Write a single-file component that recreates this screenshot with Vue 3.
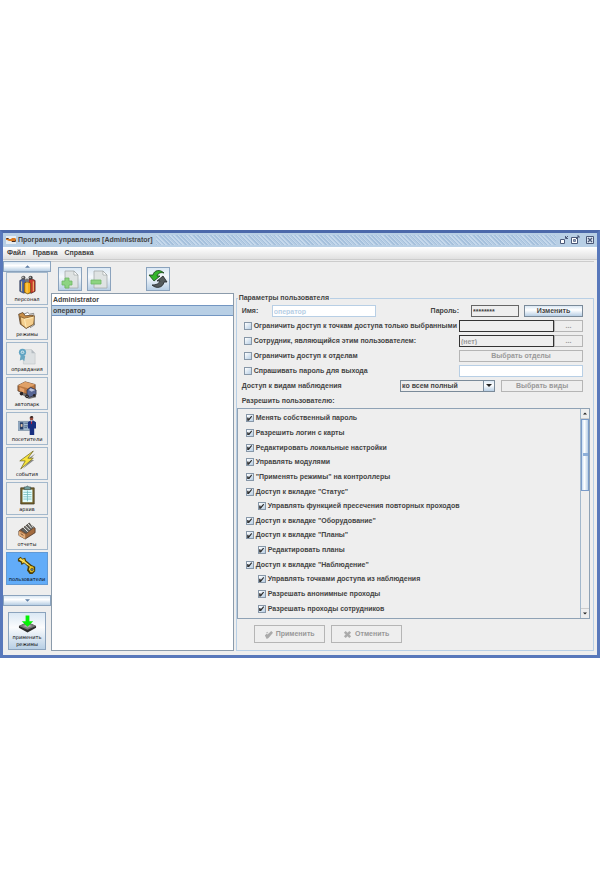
<script setup>
import { ref } from 'vue'

const sections = [
  { id: 'staff', label: 'персонал' },
  { id: 'modes', label: 'режимы' },
  { id: 'excuse', label: 'оправдания' },
  { id: 'cars', label: 'автопарк' },
  { id: 'visitors', label: 'посетители' },
  { id: 'events', label: 'события' },
  { id: 'archive', label: 'архив' },
  { id: 'reports', label: 'отчеты' },
  { id: 'users', label: 'пользователи' }
]
const activeSection = ref('users')
const users = ['Administrator', 'оператор']
const selectedUser = ref('оператор')
const permissions = ref([
  { text: 'Менять собственный пароль', on: true },
  { text: 'Разрешить логин с карты', on: true },
  { text: 'Редактировать локальные настройки', on: true },
  { text: 'Управлять модулями', on: true },
  { text: '"Применять режимы" на контроллеры', on: true },
  { text: 'Доступ к вкладке "Статус"', on: true },
  { text: 'Управлять функцией пресечения повторных проходов', on: true, sub: true },
  { text: 'Доступ к вкладке "Оборудование"', on: true },
  { text: 'Доступ к вкладке "Планы"', on: true },
  { text: 'Редактировать планы', on: true, sub: true },
  { text: 'Доступ к вкладке "Наблюдение"', on: true },
  { text: 'Управлять точками доступа из наблюдения', on: true, sub: true },
  { text: 'Разрешать анонимные проходы', on: true, sub: true },
  { text: 'Разрешать проходы сотрудников', on: true, sub: true }
])
</script>

<template>
  <main class="screen">
    <div class="window">
      <header class="titlebar">
        <svg class="app-icon" viewBox="0 0 10 8">
          <rect width="10" height="8" fill="#e6edf2" />
          <path d="M0 2h2l1 1h2l1-1h3l1 1v2l-1 1H6L5 5H3L1 4H0z" fill="#d97a22" />
          <path d="M0 2h2l1 1H1zM6 5h3l1-1v1L9 6H6z" fill="#3d2b25" />
        </svg>
        <h1>Программа управления [Administrator]</h1>
        <span class="bumps"></span>
        <button class="win-btn" aria-label="Свернуть">
          <svg viewBox="0 0 10 10"><path d="M1.500 4.500h4v4h-4z" fill="#fff" stroke="#4a5878" /><path d="M9 1L7 3M6.500 1v2.500H9" fill="none" stroke="#4a5878" /></svg>
        </button>
        <button class="win-btn" aria-label="Развернуть">
          <svg viewBox="0 0 10 10"><path d="M1.500 2.500h6v6h-6z" fill="#fff" stroke="#4a5878" /><path d="M3.500 6.500v-2h2v2z" fill="#8fa3c0" stroke="#4a5878" stroke-width=".7" /><path d="M6 4l3-3M7 1h2v2" fill="none" stroke="#4a5878" /></svg>
        </button>
        <button class="win-btn close" aria-label="Закрыть">
          <svg viewBox="0 0 10 10"><path d="M1.500 1.500h7v7h-7z" fill="#dfe9f3" stroke="#4a5878" /><path d="M3 3l4 4M7 3L3 7" stroke="#4a5878" stroke-width="1.300" /></svg>
        </button>
      </header>

      <nav class="menu">
        <a href="#file">Файл</a>
        <a href="#edit">Правка</a>
        <a href="#help">Справка</a>
      </nav>

      <div class="content">
        <aside class="sidebar">
          <button class="scroll-strip" aria-label="Вверх"><svg viewBox="0 0 6 3"><path d="M0 3l3-3 3 3z" fill="#5e7ea6" /></svg></button>
          <div class="sections">
            <button
              v-for="s in sections"
              :key="s.id"
              class="section"
              :class="{ active: s.id === activeSection }"
              @click="activeSection = s.id"
            >
              <svg v-if="s.id === 'staff'" viewBox="0 0 20 22">
                <path d="M6 20l8 1 5-3-4-1z" fill="#9b9b9b" />
                <path d="M2 6l4-2 3 2v13l-3 1-4-2z" fill="#4a63a5" stroke="#1d2440" stroke-width=".7" />
                <path d="M12 5l3-1 4 2v12l-4 2-3-2z" fill="#c93a2c" stroke="#3a1512" stroke-width=".7" />
                <path d="M7 9l3-2 4 2v10l-3 2-4-2z" fill="#f7ae18" stroke="#59400e" stroke-width=".7" />
                <path d="M10 9v11M4 7v11M17 7v11" stroke="#fbd97b" stroke-width="1" />
                <circle cx="6" cy="3" r="2.300" fill="#555" /><circle cx="14" cy="3" r="2.300" fill="#444" />
                <circle cx="10" cy="6" r="2.200" fill="#777" /><circle cx="5.500" cy="2.500" r=".9" fill="#ddd" /><circle cx="13.500" cy="2.500" r=".9" fill="#ccc" />
              </svg>
              <svg v-else-if="s.id === 'modes'" class="wide" viewBox="0 0 24 22">
                <path d="M8 4l5-2 2 2 5-1 1 14-5 3z" fill="#fff" stroke="#444" stroke-width=".7" />
                <path d="M2 4l5-2 3 4 9-1 1 11-9 5-7-5z" fill="#c98f49" stroke="#3f2b15" stroke-width=".8" />
                <path d="M4 7l5 2 12-3-1 10-9 5-6-5z" fill="#f5cf8e" stroke="#6b481f" stroke-width=".8" />
                <path d="M9 10l10-2M9 10l2 10" stroke="#fff0c2" />
              </svg>
              <svg v-else-if="s.id === 'excuse'" viewBox="0 0 20 22">
                <path d="M6 5h9l4 4v12H6z" fill="#dce0e2" stroke="#c1c6c9" stroke-width=".7" /><path d="M15 5l4 4h-4z" fill="#b5bcc1" />
                <path d="M3 11l-1 6 3-1 2 2 1-6" fill="#68a6c1" />
                <circle cx="5" cy="8" r="4" fill="#61a4c3" /><circle cx="5" cy="8" r="2" fill="#c5dfe9" /><circle cx="5" cy="8" r="1" fill="#76aec6" />
              </svg>
              <svg v-else-if="s.id === 'cars'" class="wide" viewBox="0 0 22 22">
                <path d="M2 14l11 7 8-2v-2z" fill="#747474" />
                <path d="M1 6l8-4 11 3v7l-8 4-11-4z" fill="#bb7842" stroke="#40271b" stroke-width=".7" />
                <path d="M1 6l8-4 11 3-8 4z" fill="#e0a168" /><path d="M3 8v4l5 2v-4z" fill="#e5a16c" />
                <path d="M11 11l4-3 6 3v5l-7 3-3-2z" fill="#596796" stroke="#25283c" stroke-width=".7" /><path d="M13 11l2-2 5 2-4 2z" fill="#bdc5dc" />
                <circle cx="5" cy="15" r="2" fill="#292426" /><circle cx="11" cy="18" r="2" fill="#292426" /><circle cx="19" cy="17" r="1.500" fill="#292426" /><circle cx="11" cy="18" r=".7" fill="#aaa" />
              </svg>
              <svg v-else-if="s.id === 'visitors'" viewBox="0 0 20 22">
                <path d="M0 7h13v10H0z" fill="#a6bdd2" stroke="#62788f" stroke-width=".7" /><path d="M2 8h4v8H2z" fill="#263e68" /><path d="M3 10h2v3H3z" fill="#e2c6aa" /><path d="M7 9h4M7 12h4M7 14h3" stroke="#3c5878" />
                <circle cx="15" cy="4" r="2" fill="#984e40" /><path d="M13 3c0-2 4-3 4 0z" fill="#2b1a18" />
                <path d="M11 8l3-2h3l3 2v7h-2v7h-5v-7h-2z" fill="#182f80" /><path d="M14 6h2l-1 4z" fill="#fff" /><path d="M15 7v3" stroke="#b71b30" />
              </svg>
              <svg v-else-if="s.id === 'events'" viewBox="0 0 20 22">
                <path d="M19 4L9 11h5L5 21l13-10h-5z" fill="#8d8d8d" />
                <path d="M17 1L2 12h6L3 21 17 9h-6z" fill="#f8e43c" stroke="#6c641f" stroke-width=".8" />
              </svg>
              <svg v-else-if="s.id === 'archive'" viewBox="0 0 20 22">
                <path d="M3 3h15v18H3z" fill="#75632d" stroke="#41381c" stroke-width=".8" /><path d="M5 5h11v14H5z" fill="#e5ffff" />
                <path d="M7 2h2l1-1h1l1 1h2v3H7z" fill="#729d9d" stroke="#344b4b" stroke-width=".6" />
                <path d="M6 8h9M6 10.500h9M6 13h9M6 15.500h9M10.500 6v12" stroke="#6fb8ba" stroke-width=".9" />
              </svg>
              <svg v-else-if="s.id === 'reports'" viewBox="0 0 20 22">
                <path d="M1 12l11-8 7 5v5L8 21l-7-4z" fill="#a36b3f" stroke="#432e20" stroke-width=".8" />
                <path d="M3 11l10-8 5 5-9 7z" fill="#62615e" stroke="#333" stroke-width=".5" />
                <path d="M5 7l6 6M7 5l6 6M10 3l5 6M13 2l4 6" stroke="#f2f2ed" stroke-width="1.100" />
                <path d="M1 12l7 4v5l-7-4z" fill="#e3af7c" /><path d="M3 15l3 2" stroke="#6d452b" />
              </svg>
              <svg v-else class="wide" viewBox="0 0 22 22">
                <path d="M1 4l3-2 2 2 3-1 1 3 6 5 4 2v5l-3 3h-3l-3-4 1-4-4-4-3 2-1-3-3-1z" fill="#4b3d05" />
                <path d="M2 5l2-2 2 2 2-1 1 3 6 5 3 1 1 4-2 2h-2l-2-3 1-3-6-5-2 1-1-2z" fill="#efc92f" />
                <path d="M3 5l3 1 6 5" fill="none" stroke="#fff199" stroke-width=".9" />
                <circle cx="16.500" cy="16" r="1.500" fill="#4f749a" stroke="#5b4800" stroke-width=".6" />
              </svg>
              <span>{{ s.label }}</span>
            </button>
          </div>
          <button class="scroll-strip down" aria-label="Вниз"><svg viewBox="0 0 6 3"><path d="M0 0h6L3 3z" fill="#5e7ea6" /></svg></button>
          <button class="apply-modes">
            <svg viewBox="0 0 20 18">
              <path d="M1 11l9-4 9 4v2l-9 5-9-5z" fill="#2d2d2d" /><path d="M1 11l9-4 9 4-9 4z" fill="#777" /><path d="M5 11l5-2 5 2-5 2z" fill="#a5a5a5" />
              <path d="M8 0h4v6h4l-6 6-6-6h4z" fill="#05f205" />
            </svg>
            <span>применить режимы</span>
          </button>
        </aside>

        <div class="work">
          <div class="toolbar">
            <button aria-label="Добавить">
              <svg viewBox="0 0 20 20"><path d="M5 2h9l4 4v13H5z" fill="#dfe3e3" stroke="#a5abac" stroke-width=".8" /><path d="M14 2v4h4z" fill="#fff" stroke="#949b9c" stroke-width=".6" /><path d="M5 9h4v3h3v4H9v3H5v-3H2v-4h3z" fill="#8dd481" stroke="#6fb766" stroke-width=".8" /></svg>
            </button>
            <button aria-label="Удалить">
              <svg viewBox="0 0 20 20"><path d="M5 2h9l4 4v13H5z" fill="#dfe3e3" stroke="#a5abac" stroke-width=".8" /><path d="M14 2v4h4z" fill="#fff" stroke="#949b9c" stroke-width=".6" /><path d="M2 11h10v4H2z" fill="#8dd481" stroke="#6fb766" stroke-width=".8" /></svg>
            </button>
            <button class="refresh" aria-label="Обновить">
              <svg viewBox="0 0 20 20">
                <path d="M16 4C12 0 6 1 5 6H1l5 6 6-5H9c1-3 4-4 7-3z" fill="#35b62b" stroke="#173c18" stroke-width=".8" />
                <path d="M4 16c4 4 11 3 12-3h3l-4-6-6 5h3c-1 3-4 4-8 4z" fill="#555b5d" stroke="#202526" stroke-width=".8" />
              </svg>
            </button>
          </div>

          <div class="panes">
            <ul class="users">
              <li v-for="u in users" :key="u">
                <button :class="{ selected: u === selectedUser }" @click="selectedUser = u">{{ u }}</button>
              </li>
            </ul>

            <fieldset class="params">
              <legend>Параметры пользователя</legend>
              <div class="form">
                <div class="row">
                  <label class="name-label" for="name">Имя:</label>
                  <input id="name" class="name" type="text" value="оператор" disabled />
                  <label class="push" for="pass">Пароль:</label>
                  <input id="pass" class="pass" type="text" value="********" readonly />
                  <button class="btn change">Изменить</button>
                </div>
                <div class="row">
                  <label class="check"><input type="checkbox" />Ограничить доступ к точкам доступа только выбранными</label>
                  <input class="dark" type="text" aria-label="Точки доступа" disabled />
                  <button class="btn dots" disabled>...</button>
                </div>
                <div class="row">
                  <label class="check"><input type="checkbox" />Сотрудник, являющийся этим пользователем:</label>
                  <input class="dark" type="text" value="(нет)" aria-label="Сотрудник" disabled />
                  <button class="btn dots" disabled>...</button>
                </div>
                <div class="row">
                  <label class="check"><input type="checkbox" />Ограничить доступ к отделам</label>
                  <button class="btn full" disabled>Выбрать отделы</button>
                </div>
                <div class="row">
                  <label class="check"><input type="checkbox" />Спрашивать пароль для выхода</label>
                  <input class="full exit" type="text" aria-label="Пароль для выхода" />
                </div>
                <div class="row">
                  <label for="views">Доступ к видам наблюдения</label>
                  <div class="combo">
                    <select id="views"><option>ко всем полный</option></select>
                    <span class="combo-arrow"><svg viewBox="0 0 6 3"><path d="M0 0h6L3 3z" fill="#222" /></svg></span>
                  </div>
                  <button class="btn views" disabled>Выбрать виды</button>
                </div>
                <div class="row"><span>Разрешить пользователю:</span></div>
              </div>

              <div class="perm-box">
                <div class="perms">
                  <label v-for="p in permissions" :key="p.text" class="check" :class="{ sub: p.sub }">
                    <input v-model="p.on" type="checkbox" />{{ p.text }}
                  </label>
                </div>
                <div class="scrollbar">
                  <button aria-label="Прокрутить вверх"><svg viewBox="0 0 6 3"><path d="M0 3l3-3 3 3z" fill="#222" /></svg></button>
                  <div class="track"><div class="thumb"></div></div>
                  <button aria-label="Прокрутить вниз"><svg viewBox="0 0 6 3"><path d="M0 0h6L3 3z" fill="#222" /></svg></button>
                </div>
              </div>

              <div class="actions">
                <button class="btn" disabled>
                  <svg viewBox="0 0 10 10"><path d="M1 6l2-2 1 1 4-4 2 2-5 6-2 1z" fill="#aaa" /><path d="M2 3l2-1 1 2z" fill="#bbb" /></svg>Применить
                </button>
                <button class="btn" disabled>
                  <svg viewBox="0 0 10 10"><path d="M1 3l2-2 2 2 2-2 2 2-2 2 2 2-2 2-2-2-2 2-2-2 2-2z" fill="#aaa" /></svg>Отменить
                </button>
              </div>
            </fieldset>
          </div>
        </div>
      </div>
    </div>
  </main>
</template>

<style>
body {
  margin: 0;
  background: #fff;
}
</style>

<style scoped>
* {
  box-sizing: border-box;
}
.screen {
  min-height: 100vh;
  display: flex;
  flex-direction: column;
  justify-content: center;
  font: bold 7px/10px "Liberation Sans", Arial, sans-serif;
  color: #444;
}
button,
input,
select {
  margin: 0;
  padding: 0;
  font: inherit;
  color: inherit;
  border-radius: 0;
  outline: 0;
}
svg {
  display: block;
  flex: none;
}
.window {
  background: #eee;
  border: 3px solid #5878bb;
  border-top-color: #4c69aa;
}
.titlebar {
  height: 14px;
  display: flex;
  align-items: center;
  padding: 0 2px 0 3px;
  background: #b8cfe5;
}
.app-icon {
  width: 10px;
  height: 8px;
}
h1 {
  margin: 0 3px 0 2px;
  font: inherit;
}
.bumps {
  flex: 1;
  height: 10px;
  margin-right: 2px;
  background: repeating-linear-gradient(45deg, #a5c0dc 0 1px, #c6d9ec 1px 2px, #b5cce3 2px 3px);
}
.win-btn {
  width: 10px;
  height: 10px;
  margin-left: 1px;
  border: 0;
  background: none;
}
.win-btn.close {
  margin-left: 5px;
}
.menu {
  height: 13px;
  display: flex;
  align-items: center;
  gap: 7px;
  padding-left: 4px;
  background: linear-gradient(#fff, #e0e0e0);
  border-bottom: 1px solid #ccc;
}
.menu a {
  color: inherit;
  text-decoration: none;
}
.content {
  display: grid;
  grid-template-columns: 48px 1fr;
  padding: 1px 3px 4px 0;
}
.sidebar {
  display: flex;
  flex-direction: column;
  align-items: center;
}
.scroll-strip {
  width: 100%;
  height: 11px;
  display: grid;
  place-items: center;
  border: 1px solid #8ba3bd;
  background: linear-gradient(#dbe8f4, #fff 40%, #b8cfe5);
}
.scroll-strip svg {
  width: 5px;
  height: 3px;
}
.sections {
  display: grid;
  gap: 2px;
  margin-bottom: 10px;
}
.section {
  width: 42px;
  height: 33px;
  display: flex;
  flex-direction: column;
  align-items: center;
  justify-content: flex-end;
  padding-bottom: 1px;
  border: 1px solid #a3b8cc;
  background: #eee;
  color: #000;
}
.section svg {
  width: 18px;
  height: 20px;
}
.section svg.wide {
  width: 20px;
}
.section span,
.apply-modes span {
  font: 5px/8px "DejaVu Sans", sans-serif;
}
.section.active {
  background: #62acf8;
  border-color: #6199d4;
}
.apply-modes {
  width: 38px;
  height: 38px;
  display: flex;
  flex-direction: column;
  align-items: center;
  justify-content: space-between;
  margin-top: 6px;
  padding: 2px 4px 1px;
  border: 1px solid #8ba3bd;
  background: linear-gradient(#dbe8f4, #fbfcfd 40%, #b8cfe5);
  color: #000;
}
.apply-modes svg {
  width: 19px;
  height: 18px;
}
.apply-modes span {
  line-height: 7px;
}
.work {
  min-width: 0;
  display: flex;
  flex-direction: column;
}
.toolbar {
  height: 32px;
  display: flex;
  align-items: center;
  gap: 5px;
  padding: 3px 0 0 7px;
  border-top: 1px solid #ccc;
}
.toolbar button {
  width: 24px;
  height: 24px;
  display: grid;
  place-items: center;
  border: 1px solid #8ba3bd;
  background: linear-gradient(#dbe8f4, #f6f9fc 40%, #b8cfe5);
}
.toolbar svg {
  width: 20px;
  height: 20px;
}
.toolbar .refresh {
  margin-left: 30px;
}
.panes {
  flex: 1;
  display: grid;
  grid-template-columns: 183fr 359fr;
  gap: 2px;
}
.users {
  margin: 0;
  padding: 0;
  list-style: none;
  background: #fff;
  border: 1px solid #8b9bab;
}
.users button {
  display: block;
  width: 100%;
  height: 11px;
  padding-left: 1px;
  border: 1px solid transparent;
  border-width: 1px 0;
  line-height: 9px;
  text-align: left;
  background: none;
}
.users .selected {
  background: #b8cfe5;
  border-color: #7396c2;
}
.params {
  min-width: 0;
  margin: 0;
  padding: 0 3px 7px 0;
  border: 1px solid #b8cfe5;
}
legend {
  margin-left: 1px;
  padding: 0 1px;
}
.form {
  display: grid;
  grid-template-rows: repeat(7, 1fr);
  height: 104px;
  margin-top: 1px;
  padding: 0 7px 0 5px;
}
.row {
  display: flex;
  align-items: center;
}
.name-label {
  width: 30px;
}
.push {
  margin-left: auto;
  margin-right: 12px;
}
input[type="text"] {
  height: 12px;
  padding: 0 1px;
  border: 1px solid #b8cfe5;
  background: #fff;
}
.name {
  width: 104px;
}
input.name:disabled {
  color: #b8cfe5;
}
.row input.pass {
  width: 48px;
  border-color: #666;
  background: #eee;
}
.row .check {
  margin-left: 2px;
  margin-right: auto;
}
.row input.dark {
  width: 95px;
  border-color: #333;
  background: #eee;
  color: #999;
}
.btn {
  height: 12px;
  display: flex;
  align-items: center;
  justify-content: center;
  border: 1px solid #7a8a99;
  background: linear-gradient(#dbe8f4, #fff 40%, #b8cfe5);
}
.btn:disabled {
  border-color: #b5b5b5;
  background: #eee;
  color: #999;
}
.change {
  width: 59px;
  margin-left: 5px;
}
.dots {
  width: 29px;
}
.full {
  width: 124px;
}
.combo {
  display: flex;
  width: 95px;
  height: 12px;
  margin-left: auto;
  border: 1px solid #7a8a99;
}
.combo select {
  flex: 1;
  min-width: 0;
  border: 0;
  appearance: none;
  background: #eee;
  padding-left: 1px;
}
.combo-arrow {
  width: 11px;
  display: grid;
  place-items: center;
  border-left: 1px solid #7a8a99;
  background: linear-gradient(#dbe8f4, #fff 40%, #b8cfe5);
}
.combo-arrow svg {
  width: 6px;
  height: 3px;
}
.views {
  width: 82px;
  margin-left: 6px;
}
.check {
  display: flex;
  align-items: center;
  gap: 2px;
  white-space: nowrap;
}
.check input {
  appearance: none;
  width: 8px;
  height: 8px;
  flex: none;
  display: grid;
  place-items: center;
  border: 1px solid #8797a8;
  background: linear-gradient(135deg, #fff, #b8cfe5);
}
.check input:checked::after {
  content: "";
  width: 5px;
  height: 5px;
  background: #333;
  clip-path: polygon(0 35%, 25% 35%, 30% 60%, 85% 0, 100% 15%, 35% 100%, 0 100%);
}
.perm-box {
  display: flex;
  height: 211px;
  border: 1px solid #8fa2b5;
}
.perms {
  flex: 1;
  display: grid;
  grid-template-rows: repeat(14, 1fr);
  padding: 2px 0 2px 8px;
}
.sub {
  padding-left: 12px;
}
.scrollbar {
  width: 9px;
  display: flex;
  flex-direction: column;
  border-left: 1px solid #a3b8cc;
}
.scrollbar button {
  height: 9px;
  display: grid;
  place-items: center;
  border: 0;
  background: #eee;
}
.scrollbar svg {
  width: 4px;
  height: 3px;
}
.track {
  flex: 1;
  border: 1px solid #ccc;
  border-width: 1px 0;
}
.thumb {
  height: 38%;
  border: 1px solid #7a9bc9;
  background: linear-gradient(#8eafd8, #8eafd8) center / 5px 3px no-repeat, linear-gradient(90deg, #c8ddf2, #fff 40%, #b8cfe5);
}
.actions {
  display: flex;
  gap: 6px;
  padding: 6px 0 0 17px;
}
.actions .btn {
  width: 71px;
  height: 18px;
  gap: 3px;
}
.actions svg {
  width: 9px;
  height: 9px;
}
</style>
